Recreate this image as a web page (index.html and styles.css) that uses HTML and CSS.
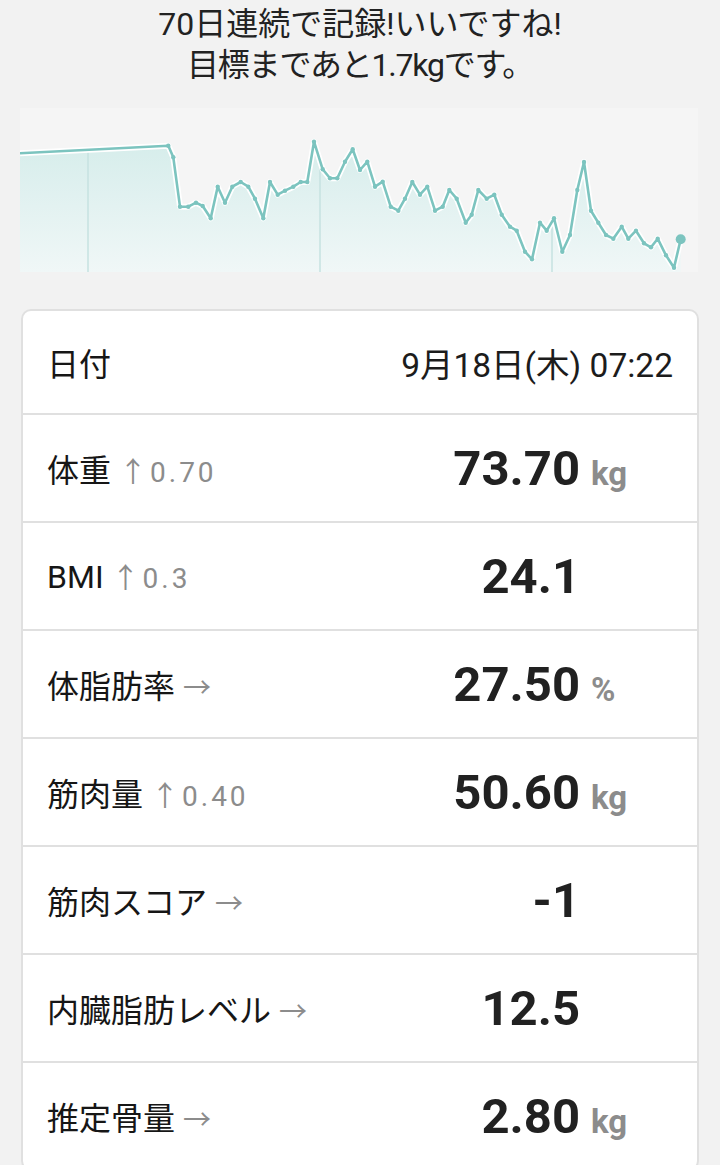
FILE: index.html
```html
<!DOCTYPE html>
<html lang="ja">
<head>
    <meta charset="UTF-8">
    <meta name="viewport" content="width=device-width, initial-scale=1.0">
    <title>体組成</title>
    <link rel="stylesheet" href="styles.css">
</head>
<body>
    <div class="summary">
        <p>70日連続で記録!いいですね!</p>
        <p class="goal">目標まであと1.7kgです。</p>
    </div>

    <!-- weight trend -->
    <svg class="chart" viewBox="20 108 680 164" xmlns="http://www.w3.org/2000/svg">
        <defs>
            <linearGradient id="areaFill" x1="0" y1="0" x2="0" y2="1">
                <stop offset="0" stop-color="#d6edeb"/>
                <stop offset="1" stop-color="#f0f7f7"/>
            </linearGradient>
            <clipPath id="areaClip">
                <polygon id="areaShape" points="20,272 20,153.3 168.3,145.7 173.3,157.3 180,206.7 188.3,206.7 196,202.7 202.7,206 210.7,218.3 217.7,186.7 225,202.7 232.3,186.7 240.7,182 248.3,186.7 255,198.7 263.3,218.3 270,182 277.7,194.7 285,190.7 293.3,186.7 300.7,182 307.3,182 314,141.7 322.7,169.3 330,178.3 337.3,178.3 345,161.7 352.7,149.3 360,170 367.3,161.7 375,186.7 382.7,181.7 390.7,206.7 398.3,210.7 405,198.7 412.3,182 420,194.7 427.3,186.7 435,210.7 442.7,206.7 449.3,190 456.7,198.7 465.7,222.7 471.7,214.7 478.3,190 486.7,198.7 494.3,194.7 501.7,214.7 510,226.7 516.7,230.7 525,251.7 532,259.3 540,222.7 546.7,230.7 554,218.3 562.3,251.7 570,235 577.3,190 584,162 591,210.7 598.3,222.7 606,235 613.3,238.7 621.7,226.7 628.3,238.7 636,230.7 644,243.3 651,247.3 657.7,238.7 666,255.3 674,267.7 680.7,239.3 680.7,272"/>
            </clipPath>
        </defs>
        <rect x="20" y="108" width="678" height="164" fill="#f5f5f5"/>
        <use href="#areaShape" fill="url(#areaFill)"/>
        <g clip-path="url(#areaClip)" stroke="#c6e2e0" stroke-width="1.5">
            <line x1="88" y1="108" x2="88" y2="272"/>
            <line x1="320" y1="108" x2="320" y2="272"/>
            <line x1="552" y1="108" x2="552" y2="272"/>
        </g>
        <polyline class="halo" points="20,153.3 168.3,145.7 173.3,157.3 180,206.7 188.3,206.7 196,202.7 202.7,206 210.7,218.3 217.7,186.7 225,202.7 232.3,186.7 240.7,182 248.3,186.7 255,198.7 263.3,218.3 270,182 277.7,194.7 285,190.7 293.3,186.7 300.7,182 307.3,182 314,141.7 322.7,169.3 330,178.3 337.3,178.3 345,161.7 352.7,149.3 360,170 367.3,161.7 375,186.7 382.7,181.7 390.7,206.7 398.3,210.7 405,198.7 412.3,182 420,194.7 427.3,186.7 435,210.7 442.7,206.7 449.3,190 456.7,198.7 465.7,222.7 471.7,214.7 478.3,190 486.7,198.7 494.3,194.7 501.7,214.7 510,226.7 516.7,230.7 525,251.7 532,259.3 540,222.7 546.7,230.7 554,218.3 562.3,251.7 570,235 577.3,190 584,162 591,210.7 598.3,222.7 606,235 613.3,238.7 621.7,226.7 628.3,238.7 636,230.7 644,243.3 651,247.3 657.7,238.7 666,255.3 674,267.7 680.7,239.3"/>
        <polyline class="line" points="20,153.3 168.3,145.7 173.3,157.3 180,206.7 188.3,206.7 196,202.7 202.7,206 210.7,218.3 217.7,186.7 225,202.7 232.3,186.7 240.7,182 248.3,186.7 255,198.7 263.3,218.3 270,182 277.7,194.7 285,190.7 293.3,186.7 300.7,182 307.3,182 314,141.7 322.7,169.3 330,178.3 337.3,178.3 345,161.7 352.7,149.3 360,170 367.3,161.7 375,186.7 382.7,181.7 390.7,206.7 398.3,210.7 405,198.7 412.3,182 420,194.7 427.3,186.7 435,210.7 442.7,206.7 449.3,190 456.7,198.7 465.7,222.7 471.7,214.7 478.3,190 486.7,198.7 494.3,194.7 501.7,214.7 510,226.7 516.7,230.7 525,251.7 532,259.3 540,222.7 546.7,230.7 554,218.3 562.3,251.7 570,235 577.3,190 584,162 591,210.7 598.3,222.7 606,235 613.3,238.7 621.7,226.7 628.3,238.7 636,230.7 644,243.3 651,247.3 657.7,238.7 666,255.3 674,267.7 680.7,239.3"/>
        <g class="dots">
            <circle cx="168.3" cy="145.7" r="2.2"/><circle cx="173.3" cy="157.3" r="2.2"/><circle cx="180" cy="206.7" r="2.2"/>
            <circle cx="188.3" cy="206.7" r="2.2"/><circle cx="196" cy="202.7" r="2.2"/><circle cx="202.7" cy="206" r="2.2"/>
            <circle cx="210.7" cy="218.3" r="2.2"/><circle cx="217.7" cy="186.7" r="2.2"/><circle cx="225" cy="202.7" r="2.2"/>
            <circle cx="232.3" cy="186.7" r="2.2"/><circle cx="240.7" cy="182" r="2.2"/><circle cx="248.3" cy="186.7" r="2.2"/>
            <circle cx="255" cy="198.7" r="2.2"/><circle cx="263.3" cy="218.3" r="2.2"/><circle cx="270" cy="182" r="2.2"/>
            <circle cx="277.7" cy="194.7" r="2.2"/><circle cx="285" cy="190.7" r="2.2"/><circle cx="293.3" cy="186.7" r="2.2"/>
            <circle cx="300.7" cy="182" r="2.2"/><circle cx="307.3" cy="182" r="2.2"/><circle cx="314" cy="141.7" r="2.2"/>
            <circle cx="322.7" cy="169.3" r="2.2"/><circle cx="330" cy="178.3" r="2.2"/><circle cx="337.3" cy="178.3" r="2.2"/>
            <circle cx="345" cy="161.7" r="2.2"/><circle cx="352.7" cy="149.3" r="2.2"/><circle cx="360" cy="170" r="2.2"/>
            <circle cx="367.3" cy="161.7" r="2.2"/><circle cx="375" cy="186.7" r="2.2"/><circle cx="382.7" cy="181.7" r="2.2"/>
            <circle cx="390.7" cy="206.7" r="2.2"/><circle cx="398.3" cy="210.7" r="2.2"/><circle cx="405" cy="198.7" r="2.2"/>
            <circle cx="412.3" cy="182" r="2.2"/><circle cx="420" cy="194.7" r="2.2"/><circle cx="427.3" cy="186.7" r="2.2"/>
            <circle cx="435" cy="210.7" r="2.2"/><circle cx="442.7" cy="206.7" r="2.2"/><circle cx="449.3" cy="190" r="2.2"/>
            <circle cx="456.7" cy="198.7" r="2.2"/><circle cx="465.7" cy="222.7" r="2.2"/><circle cx="471.7" cy="214.7" r="2.2"/>
            <circle cx="478.3" cy="190" r="2.2"/><circle cx="486.7" cy="198.7" r="2.2"/><circle cx="494.3" cy="194.7" r="2.2"/>
            <circle cx="501.7" cy="214.7" r="2.2"/><circle cx="510" cy="226.7" r="2.2"/><circle cx="516.7" cy="230.7" r="2.2"/>
            <circle cx="525" cy="251.7" r="2.2"/><circle cx="532" cy="259.3" r="2.2"/><circle cx="540" cy="222.7" r="2.2"/>
            <circle cx="546.7" cy="230.7" r="2.2"/><circle cx="554" cy="218.3" r="2.2"/><circle cx="562.3" cy="251.7" r="2.2"/>
            <circle cx="570" cy="235" r="2.2"/><circle cx="577.3" cy="190" r="2.2"/><circle cx="584" cy="162" r="2.2"/>
            <circle cx="591" cy="210.7" r="2.2"/><circle cx="598.3" cy="222.7" r="2.2"/><circle cx="606" cy="235" r="2.2"/>
            <circle cx="613.3" cy="238.7" r="2.2"/><circle cx="621.7" cy="226.7" r="2.2"/><circle cx="628.3" cy="238.7" r="2.2"/>
            <circle cx="636" cy="230.7" r="2.2"/><circle cx="644" cy="243.3" r="2.2"/><circle cx="651" cy="247.3" r="2.2"/>
            <circle cx="657.7" cy="238.7" r="2.2"/><circle cx="666" cy="255.3" r="2.2"/><circle cx="674" cy="267.7" r="2.2"/>
            <circle cx="680.7" cy="239.3" r="5"/>
        </g>
    </svg>

    <div class="card">
        <div class="row head">
            <span class="label">日付</span>
            <span class="date">9月18日(木) 07:22</span>
        </div>
        <div class="row">
            <span class="label">体重<span class="trend">↑0.70</span></span>
            <span class="figure"><span class="value">73.70</span><span class="unit">kg</span></span>
        </div>
        <div class="row">
            <span class="label">BMI<span class="trend">↑0.3</span></span>
            <span class="figure"><span class="value">24.1</span><span class="unit"></span></span>
        </div>
        <div class="row">
            <span class="label">体脂肪率<span class="trend">→</span></span>
            <span class="figure"><span class="value">27.50</span><span class="unit">%</span></span>
        </div>
        <div class="row">
            <span class="label">筋肉量<span class="trend">↑0.40</span></span>
            <span class="figure"><span class="value">50.60</span><span class="unit">kg</span></span>
        </div>
        <div class="row">
            <span class="label">筋肉スコア<span class="trend">→</span></span>
            <span class="figure"><span class="value">-1</span><span class="unit"></span></span>
        </div>
        <div class="row">
            <span class="label">内臓脂肪レベル<span class="trend">→</span></span>
            <span class="figure"><span class="value">12.5</span><span class="unit"></span></span>
        </div>
        <div class="row">
            <span class="label">推定骨量<span class="trend">→</span></span>
            <span class="figure"><span class="value">2.80</span><span class="unit">kg</span></span>
        </div>
    </div>
</body>
</html>
```

FILE: styles.css
```css
body {
    font-family: Roboto, "Noto Sans CJK JP", sans-serif;
    background-color: #f2f2f2;
    color: #212121;
    margin: 0;
    padding: 0;
}

.summary {
    text-align: center;
    font-size: 32px;
    line-height: 41px;
    padding-top: 4px;
    color: #222;
}

.summary p {
    margin: 0;
}

.summary .goal {
    letter-spacing: -1.2px;
}

.chart {
    display: block;
    width: 680px;
    height: 164px;
    margin: 22px 0 0 20px;
}

.chart .halo {
    fill: none;
    stroke: #ffffff;
    stroke-width: 6;
    stroke-linejoin: round;
}

.chart .line {
    fill: none;
    stroke: #7cc4bf;
    stroke-width: 2.6;
    stroke-linejoin: round;
}

.chart .dots {
    fill: #7cc4bf;
}

.card {
    background-color: #ffffff;
    border: 2px solid #e0e0e0;
    border-radius: 10px;
    margin: 37px 21px 0;
}

.row {
    display: flex;
    align-items: center;
    height: 106px;
    padding: 0 24px;
    border-top: 2px solid #e0e0e0;
}

.row.head {
    height: 102px;
    border-top: none;
    justify-content: space-between;
}

.label {
    font-size: 32px;
    color: #161616;
    white-space: nowrap;
}

.date {
    font-size: 33.5px;
    color: #1c1c1c;
}

.trend {
    font-size: 28px;
    letter-spacing: 3px;
    color: #8c8c8c;
    margin-left: 8px;
}

.figure {
    flex: 1;
    display: flex;
    align-items: baseline;
}

.value {
    flex: 1;
    text-align: right;
    font-size: 49px;
    font-weight: bold;
    color: #212121;
    margin-right: 11px;
}

.unit {
    width: 82px;
    font-size: 33px;
    font-weight: bold;
    color: #8c8c8c;
}
```
